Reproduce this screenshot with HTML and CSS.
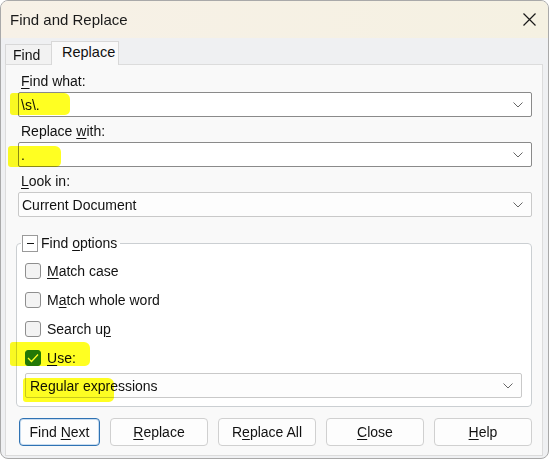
FILE: index.html
```html
<!DOCTYPE html>
<html>
<head>
	<meta charset="utf-8">
	<title>Find and Replace</title>
	<link rel="stylesheet" href="styles.css">
</head>
<body>

<div class="window">
	<div class="title-bar">
		<div class="title">Find and Replace</div>
		<div class="close-btn">
			<svg width="13" height="13" viewBox="0 0 13 13"><path d="M0.5 0.5 L12.5 12.5 M12.5 0.5 L0.5 12.5" stroke="#1a1a1a" stroke-width="1.2" fill="none"/></svg>
		</div>
	</div>

	<div class="tab-strip">
		<div class="tab">Find</div>
		<div class="tab tab-active">Replace</div>
	</div>

	<div class="panel">
		<div class="field-label first"><u>F</u>ind what:</div>
		<div class="combo editable">
			<span class="combo-text">\s\.</span>
			<svg class="chevron" width="10" height="6" viewBox="0 0 10 6"><path d="M0.5 0.5 L5 5 L9.5 0.5" stroke="#666" fill="none"/></svg>
		</div>

		<div class="field-label">Replace <u>w</u>ith:</div>
		<div class="combo editable">
			<span class="combo-text">.</span>
			<svg class="chevron" width="10" height="6" viewBox="0 0 10 6"><path d="M0.5 0.5 L5 5 L9.5 0.5" stroke="#666" fill="none"/></svg>
		</div>

		<div class="field-label"><u>L</u>ook in:</div>
		<div class="combo">
			<span class="combo-text">Current Document</span>
			<svg class="chevron" width="10" height="6" viewBox="0 0 10 6"><path d="M0.5 0.5 L5 5 L9.5 0.5" stroke="#666" fill="none"/></svg>
		</div>

		<fieldset class="options">
			<legend>
				<span class="toggle-box"></span>
				<span>Find <u>o</u>ptions</span>
			</legend>

			<div class="check-row"><span class="check"></span><span><u>M</u>atch case</span></div>
			<div class="check-row"><span class="check"></span><span>M<u>a</u>tch whole word</span></div>
			<div class="check-row"><span class="check"></span><span>Search u<u>p</u></span></div>
			<div class="check-row">
				<span class="check checked">
					<svg width="12" height="10" viewBox="0 0 12 10"><path d="M1 5 L4.5 8.5 L11 1.5" stroke="#fff" stroke-width="1.3" fill="none"/></svg>
				</span>
				<span><u>U</u>se:</span>
			</div>

			<div class="combo inner-combo">
				<span class="combo-text">Regular expressions</span>
				<svg class="chevron" width="10" height="6" viewBox="0 0 10 6"><path d="M0.5 0.5 L5 5 L9.5 0.5" stroke="#666" fill="none"/></svg>
			</div>
		</fieldset>

		<div class="buttons">
			<div class="btn btn-default"><span>Find <u>N</u>ext</span></div>
			<div class="btn"><span><u>R</u>eplace</span></div>
			<div class="btn"><span>R<u>e</u>place All</span></div>
			<div class="btn"><span><u>C</u>lose</span></div>
			<div class="btn"><span><u>H</u>elp</span></div>
		</div>
	</div>

	<!-- marker highlights drawn over the screenshot -->
	<div class="marker m1"></div>
	<div class="marker m2"></div>
	<div class="marker m3"></div>
	<div class="marker m4"></div>
</div>

</body>
</html>
```

FILE: styles.css
```css
* {
	box-sizing: border-box;
}

body {
	margin: 0;
	background: #ffffff;
	font-family: "Liberation Sans", Arial, sans-serif;
	font-size: 14px;
	color: #111;
}

u {
	text-decoration-thickness: 1px;
	text-underline-offset: 2px;
}

.window {
	position: relative;
	width: 549px;
	height: 459px;
	border: 1px solid #a9a9a9;
	border-radius: 8px;
	background: #eff0f2;
	overflow: hidden;
}

/* Title */
.title-bar {
	height: 37px;
	display: flex;
	align-items: center;
	justify-content: space-between;
	padding: 0 12px 1px 9px;
	background: linear-gradient(to right, #f7f1e7, #f5f1e2);
}

.title {
	font-size: 15px;
	color: #1a1a1a;
}

.close-btn {
	display: flex;
	margin-top: 1px;
}

/* Tabs */
.tab-strip {
	height: 26px;
	display: flex;
	align-items: flex-end;
	padding-left: 4px;
}

.tab {
	height: 20px;
	width: 47px;
	padding: 1px 0 0 7px;
	background: #f2f2f2;
	border: 1px solid #d8d8d8;
	border-bottom: none;
	line-height: 18px;
}

.tab-active {
	position: relative;
	z-index: 1;
	width: 68px;
	height: 24px;
	margin-bottom: -1px;
	margin-left: -1px;
	padding: 0 0 0 10px;
	background: #f9f9f9;
	line-height: 21px;
	font-size: 14.5px;
}

/* Panel */
.panel {
	height: 392px;
	margin: 0 5px 0 4px;
	border: 1px solid #dcdcdc;
	background: #f9f9f9;
	padding-top: 7px;
}

.field-label {
	height: 18px;
	line-height: 18px;
	padding-left: 15px;
	margin-top: 5px;
}

.field-label.first {
	margin-top: 0;
}

.combo {
	height: 25px;
	margin: 2px 10px 0 12px;
	border: 1px solid #c9c9c9;
	border-radius: 2px;
	background: #fdfdfd;
	display: flex;
	align-items: center;
	justify-content: space-between;
	padding: 0 8px 0 3px;
}

.combo.editable {
	background: #ffffff;
	border-color: #8a8a8a;
	padding-left: 2px;
}

.combo-text {
	line-height: 18px;
}

.chevron {
	display: block;
}

/* Find options group */
.options {
	margin: 17px 10px 0 10px;
	padding: 4px 9px 8px 8px;
	border: 1px solid #cbcfd2;
	border-radius: 4px;
	background: #ffffff;
	min-inline-size: 0;
}

.options legend {
	display: flex;
	align-items: center;
	gap: 3px;
	margin-left: -4px;
	padding: 0 3px 0 1px;
	height: 18px;
	line-height: 18px;
}

.toggle-box {
	width: 16px;
	height: 17px;
	border: 1px solid #9a9a9a;
	background: #fff;
	display: flex;
	align-items: center;
	justify-content: center;
}

.toggle-box::before {
	content: "";
	width: 7px;
	height: 1px;
	background: #111;
}

.check-row {
	height: 29px;
	display: flex;
	align-items: center;
	gap: 6px;
}

.check {
	width: 16px;
	height: 16px;
	border: 1px solid #8e8e8e;
	border-radius: 3px;
	background: #f3f3f3;
	display: flex;
	align-items: center;
	justify-content: center;
}

.check.checked {
	background: #23782a;
	border-color: #23782a;
}

.inner-combo {
	margin: 1px 0 0 0;
	padding-left: 4px;
}

/* Buttons */
.buttons {
	display: flex;
	gap: 10px;
	margin-top: 11px;
	padding-left: 13px;
}

.btn {
	width: 98px;
	height: 28px;
	border: 1px solid #d0d0d0;
	border-radius: 4px;
	background: #fdfdfd;
	display: flex;
	align-items: center;
	justify-content: center;
	line-height: 18px;
}

.btn-default {
	width: 81px;
	border: 1px solid #2f72b3;
	box-shadow: inset 0 0 0 1px #c8dcef;
}

/* Yellow marker strokes */
.marker {
	position: absolute;
	background: #ffff22;
	mix-blend-mode: multiply;
	border-radius: 3px 6px 5px 3px;
}

.m1 { left: 9px;  top: 92px;  width: 60px; height: 22px; }
.m2 { left: 7px;  top: 145px; width: 53px; height: 21px; }
.m3 { left: 9px;  top: 341px; width: 80px; height: 24px; }
.m4 { left: 22px; top: 377px; width: 91px; height: 24px; }
```
